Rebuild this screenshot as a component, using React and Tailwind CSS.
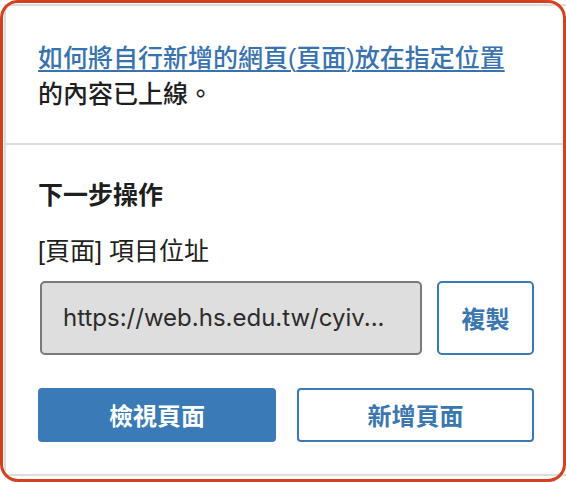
export default function App() {
  const cjk = { fontFamily: '"Noto Sans CJK TC", "Noto Sans", sans-serif' };
  const lat = { fontFamily: '"Liberation Sans", "Noto Sans CJK TC", sans-serif', lineHeight: 1 };
  return (
    <div className="relative w-[566px] h-[482px] bg-white overflow-hidden" style={cjk}>
      <div className="mt-[4px] ml-[4px] h-[472px] border-2 border-r-0 border-[#dddddd] bg-white">
        <div className="pl-[32px] pr-[20px] pt-[32px] pb-[33px] border-b-2 border-[#dddddd] text-[25px] font-medium text-[#1e1e1e] whitespace-nowrap">
          <div className="h-[36px] leading-[36px]">
            <a href="#" className="text-[#3873b0] underline underline-offset-[3px] decoration-[2px]">
              如何將自行新增的網頁<span style={lat}>(</span>頁面<span style={lat}>)</span>放在指定位置
            </a>
          </div>
          <div className="h-[36px] leading-[36px]">的內容已上線。</div>
        </div>
        <div className="pl-[32px] pr-[30px] pt-[30px] flex flex-col">
          <div className="h-[36px] text-[25px] leading-[36px] font-semibold text-[#1e1e1e]">下一步操作</div>
          <div className="mt-[20px] h-[36px] text-[25px] leading-[36px] text-[#1e1e1e] whitespace-nowrap">
            <span style={lat}>[</span>頁面<span style={lat}>] </span>項目位址
          </div>
          <div className="mt-[14px] flex gap-[15px]">
            <div
              className="ml-[2px] w-[382px] h-[74px] rounded-[5px] border-2 border-[#7a7a7a] bg-[#dedede] flex items-center pl-[21px] text-[24px] text-[#2c2c2c] whitespace-nowrap overflow-hidden"
              style={{ fontFamily: 'Inter, "Liberation Sans", sans-serif' }}
            >
              https://web.hs.edu.tw/cyiv...
            </div>
            <button className="w-[97px] h-[74px] rounded-[5px] border-2 border-[#3a79b6] bg-white text-[#3a76b0] text-[24px] font-semibold flex items-center justify-center">
              複製
            </button>
          </div>
          <div className="mt-[33px] flex gap-[21px]">
            <button className="w-[238px] h-[54px] rounded-[4px] bg-[#3a7ab6] text-white text-[24px] font-semibold flex items-center justify-center">
              檢視頁面
            </button>
            <button className="w-[237px] h-[54px] rounded-[4px] border-2 border-[#3a79b6] bg-white text-[#3a76b0] text-[24px] font-semibold flex items-center justify-center">
              新增頁面
            </button>
          </div>
        </div>
      </div>
      <div className="absolute inset-0 rounded-[18px] border-[3px] border-[#d4411f] pointer-events-none"></div>
    </div>
  );
}
